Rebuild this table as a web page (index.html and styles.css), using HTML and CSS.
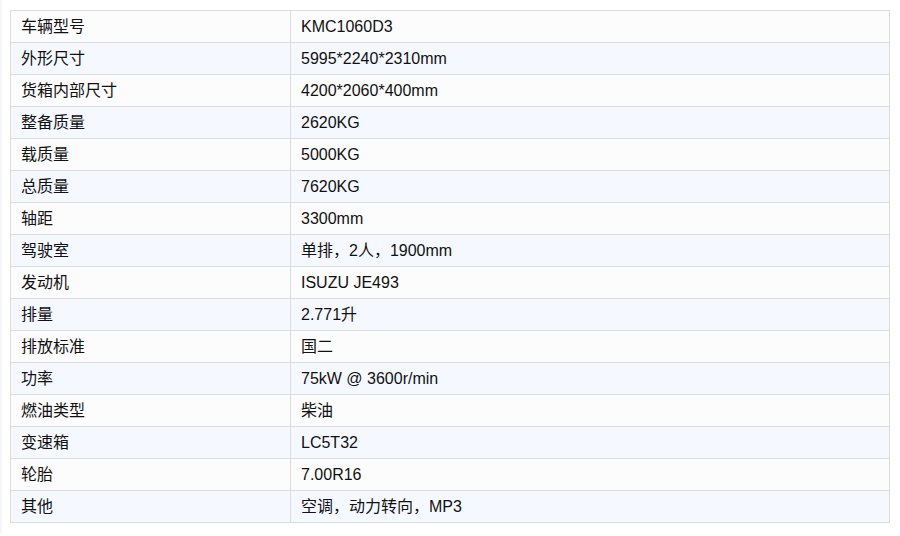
FILE: index.html
```html
<!DOCTYPE html>
<html lang="zh">
<head>
<meta charset="utf-8">
<title>KMC1060D3</title>
<link rel="stylesheet" href="styles.css">
</head>
<body>
<table class="spec">
<tbody>
<tr><td class="k">车辆型号</td><td>KMC1060D3</td></tr>
<tr><td class="k">外形尺寸</td><td>5995*2240*2310mm</td></tr>
<tr><td class="k">货箱内部尺寸</td><td>4200*2060*400mm</td></tr>
<tr><td class="k">整备质量</td><td>2620KG</td></tr>
<tr><td class="k">载质量</td><td>5000KG</td></tr>
<tr><td class="k">总质量</td><td>7620KG</td></tr>
<tr><td class="k">轴距</td><td>3300mm</td></tr>
<tr><td class="k">驾驶室</td><td>单排，2人，1900mm</td></tr>
<tr><td class="k">发动机</td><td>ISUZU JE493</td></tr>
<tr><td class="k">排量</td><td>2.771升</td></tr>
<tr><td class="k">排放标准</td><td>国二</td></tr>
<tr><td class="k">功率</td><td>75kW @ 3600r/min</td></tr>
<tr><td class="k">燃油类型</td><td>柴油</td></tr>
<tr><td class="k">变速箱</td><td>LC5T32</td></tr>
<tr><td class="k">轮胎</td><td>7.00R16</td></tr>
<tr><td class="k">其他</td><td>空调，动力转向，MP3</td></tr>
</tbody>
</table>
</body>
</html>
```
FILE: styles.css
```css
html, body {
  margin: 0;
  padding: 0;
  background: #fff;
}
body {
  padding: 10px 10px 10px 8px;
  border-left: 2px solid #f6f6f6;
  font-family: "Liberation Sans", Arial, "Noto Sans CJK SC", sans-serif;
  font-size: 16px;
  color: #111;
}
.spec {
  width: 880px;
  border-collapse: collapse;
  table-layout: fixed;
}
.spec td {
  border: 1px solid #dcdcdc;
  height: 32px;
  padding: 0 10px;
  box-sizing: border-box;
  vertical-align: middle;
  line-height: 20px;
}
.spec td.k {
  width: 280px;
}
.spec tr:nth-child(odd) td {
  background: #fcfcfc;
}
.spec tr:nth-child(even) td {
  background: #f5f9ff;
}
```
